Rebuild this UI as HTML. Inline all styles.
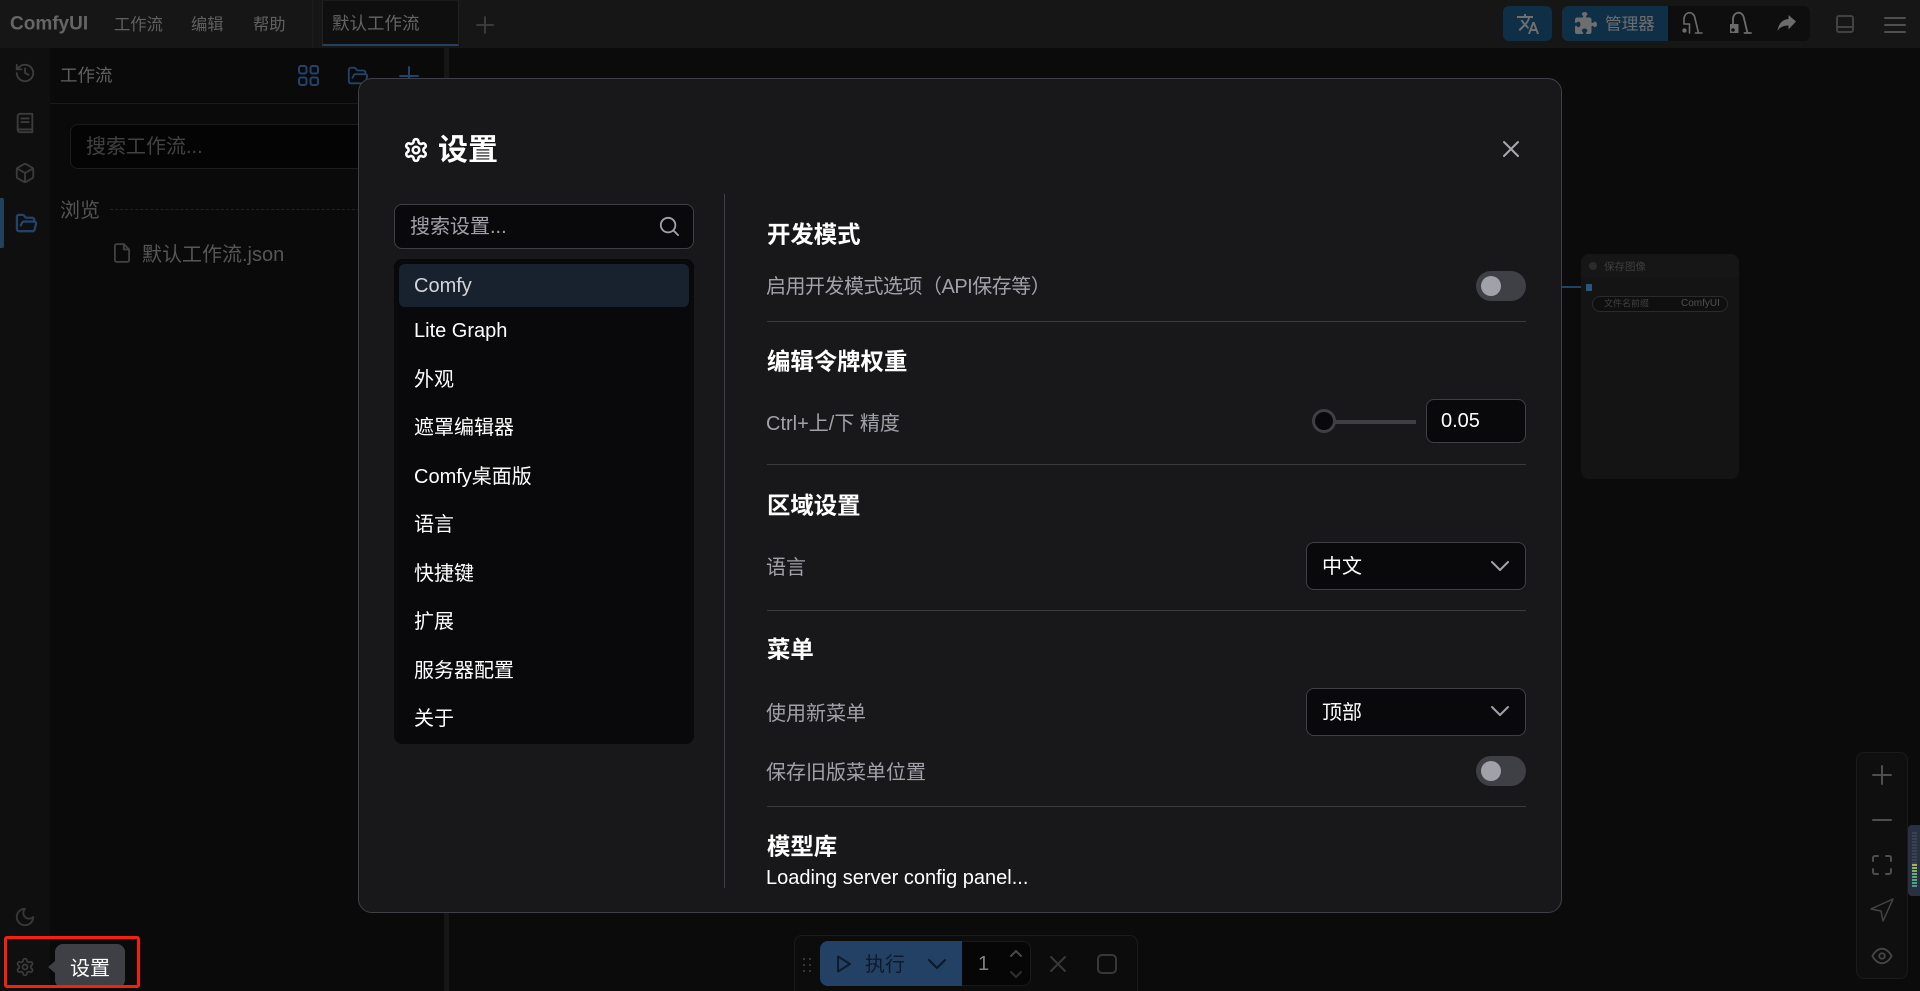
<!DOCTYPE html>
<html lang="zh"><head><meta charset="utf-8"><title>ComfyUI</title>
<style>
html,body{margin:0;padding:0;width:1920px;height:991px;overflow:hidden;background:#0b0b0c}
body{position:relative;font-family:"Liberation Sans","Noto Sans CJK SC",sans-serif;font-size:20px;color:#fff}
.a{position:absolute}
.t{position:absolute;white-space:nowrap;line-height:1;transform:translateY(calc(-50% + 1px))}
svg{position:absolute;display:block;overflow:visible}
.s{fill:none;stroke:currentColor;stroke-width:2;stroke-linecap:round;stroke-linejoin:round}
.h{font-weight:700;font-size:23.4px;left:767px}
.r{font-size:20px;left:766px;color:#a1a1aa}
.d{position:absolute;left:767px;width:759px;height:1px;background:#3b3b3f}
.i{left:414px;font-size:20px;color:#fff}
.tg{position:absolute;left:1476px;width:50px;height:30px;border-radius:15px;background:#3f3f46}
.tg:after{content:"";position:absolute;left:5px;top:5px;width:20px;height:20px;border-radius:50%;background:#a1a1aa}
.sel{position:absolute;left:1306px;width:218px;background:#09090b;border:1px solid #3f3f46;border-radius:8px;box-sizing:content-box}
</style></head><body>

<!-- top bar -->
<div class="a" style="left:0;top:0;width:1920px;height:48px;background:#161616"></div>
<div class="t" style="left:10px;top:23px;font-size:19px;font-weight:700;color:#666">ComfyUI</div>
<div class="t" style="left:114px;top:24px;font-size:16.3px;color:#606060">工作流</div>
<div class="t" style="left:191px;top:24px;font-size:16.3px;color:#606060">编辑</div>
<div class="t" style="left:253px;top:24px;font-size:16.3px;color:#606060">帮助</div>
<div class="a" style="left:312px;top:0;width:1px;height:48px;background:#1c1c1c"></div>
<div class="a" style="left:322px;top:0;width:137px;height:46px;background:#0f0f0f;border:1px solid #232323;border-top:1px solid #1a1a1a;border-bottom:2px solid #23405f;box-sizing:border-box"></div>
<div class="t" style="left:332px;top:23px;font-size:17.5px;color:#646464">默认工作流</div>
<svg style="left:476px;top:16px;color:#3a3a3a" width="18" height="18" viewBox="0 0 18 18"><path class="s" d="M9 1v16M1 9h16"/></svg>

<div class="a" style="left:1503px;top:6px;width:49px;height:35px;background:#0f2f47;border-radius:6px"></div>
<svg style="left:1516px;top:12px;color:#707070" width="24" height="24" viewBox="0 0 24 24"><path fill="currentColor" d="M12.87 15.07l-2.54-2.51.03-.03A17.5 17.5 0 0 0 14.07 6H17V4h-7V2H8v2H1v2h11.17C11.5 7.92 10.44 9.75 9 11.35 8.07 10.32 7.3 9.19 6.69 8h-2c.73 1.63 1.73 3.17 2.98 4.56l-5.09 5.02L4 19l5-5 3.11 3.11.76-2.04zM18.5 10h-2L12 22h2l1.12-3h4.75L21 22h2l-4.5-12zm-2.62 7l1.62-4.33L19.12 17h-3.24z"/></svg>
<div class="a" style="left:1562px;top:6px;width:248px;height:35px;background:#0e0e0e;border-radius:6px"></div>
<div class="a" style="left:1562px;top:6px;width:106px;height:35px;background:#0f2f47;border-radius:6px 0 0 6px"></div>
<svg style="left:1575px;top:12px;color:#6e6e6e" width="22" height="22" viewBox="0 0 512 512"><path fill="currentColor" d="M192 104.8c0-9.2-5.8-17.3-13.2-22.8C167.2 73.3 160 61.3 160 48c0-26.5 28.7-48 64-48s64 21.5 64 48c0 13.3-7.2 25.3-18.8 34-7.4 5.5-13.2 13.600-13.200 22.800 0 12.800 10.400 23.200 23.200 23.200H336c26.500 0 48 21.500 48 48v56.800c0 12.800 10.400 23.200 23.200 23.200 9.200 0 17.300-5.800 22.800-13.200 8.700-11.600 20.700-18.800 34-18.800 26.500 0 48 28.700 48 64s-21.500 64-48 64c-13.300 0-25.300-7.200-34-18.800-5.500-7.400-13.600-13.200-22.800-13.200-12.800 0-23.200 10.400-23.200 23.200V464c0 26.500-21.500 48-48 48h-56.800c-12.800 0-23.200-10.400-23.200-23.200 0-9.200 5.800-17.300 13.200-22.800 11.600-8.700 18.800-20.700 18.800-34 0-26.500-28.700-48-64-48s-64 21.500-64 48c0 13.300 7.200 25.300 18.800 34 7.400 5.500 13.200 13.600 13.200 22.800 0 12.800-10.400 23.200-23.200 23.200H48c-26.500 0-48-21.500-48-48V343.200C0 330.400 10.400 320 23.200 320c9.200 0 17.300 5.800 22.800 13.200 8.700 11.600 20.700 18.800 34 18.800 26.500 0 48-28.700 48-64s-21.500-64-48-64c-13.300 0-25.300 7.200-34 18.800-5.500 7.400-13.600 13.200-22.800 13.200C10.400 256 0 245.600 0 232.800V176c0-26.500 21.500-48 48-48h120.800c12.800 0 23.200-10.400 23.200-23.200z"/></svg>
<div class="t" style="left:1605px;top:24px;font-size:16.6px;color:#6e6e6e">管理器</div>
<svg style="left:1681px;top:12px;color:#6c6c6c" width="22" height="22" viewBox="0 0 22 22"><path class="s" d="M3 12V8a5.500 6.500 0 0 1 11-1.500L17.500 21M14.500 21H21M3 12h5.500v9" style="stroke-width:1.600"/><circle cx="3.500" cy="18.500" r="2.200" fill="currentColor"/></svg>
<svg style="left:1729px;top:12px;color:#6c6c6c" width="22" height="22" viewBox="0 0 22 22"><path class="s" d="M4 12V8a5.500 6.500 0 0 1 11-1.500L18.500 21M15.500 21H22" style="stroke-width:1.800"/><path fill="currentColor" d="M1 12h8.500v9H1z"/><circle cx="4" cy="18" r="1.800" fill="#0e0e0e"/></svg>
<svg style="left:1777px;top:14px;color:#6c6c6c" width="20" height="20" viewBox="0 0 20 20"><path fill="currentColor" d="M19 7.500 11.500 1v4C5 5.500 1.500 10 .5 17c2.500-4 6-5.500 11-5.500V15.500z"/></svg>
<svg style="left:1836px;top:15px;color:#424242" width="18" height="18" viewBox="0 0 18 18"><rect class="s" x="1" y="1" width="16" height="16" rx="2"/><path class="s" d="M1 12h16"/></svg>
<svg style="left:1885px;top:17px;color:#505050" width="20" height="16" viewBox="0 0 20 16"><path class="s" d="M0 1h20M0 8h20M0 15h20"/></svg>

<!-- left strip -->
<div class="a" style="left:0;top:48px;width:50px;height:943px;background:#0f0f0f"></div>
<div class="a" style="left:50px;top:48px;width:394px;height:943px;background:#0a0a0a"></div>
<div class="a" style="left:444px;top:48px;width:5px;height:943px;background:#161616"></div>
<div class="a" style="left:0;top:198px;width:4px;height:50px;background:#23405f;border-radius:0 2px 2px 0"></div>
<svg style="left:14px;top:62px;color:#3c3c3c" width="22" height="22" viewBox="0 0 24 24"><path class="s" d="M3 12a9 9 0 1 0 9-9 9.750 9.750 0 0 0-6.740 2.740L3 8"/><path class="s" d="M3 3v5h5M12 7v5l4 2"/></svg>
<svg style="left:14px;top:112px;color:#3c3c3c" width="22" height="22" viewBox="0 0 24 24"><path class="s" d="M4 19.500v-15A2.500 2.500 0 0 1 6.500 2H20v20H6.500A2.500 2.500 0 0 1 4 19.500z"/><path class="s" d="M4 19h16M8 7h8M8 11h8"/></svg>
<svg style="left:14px;top:162px;color:#3c3c3c" width="22" height="22" viewBox="0 0 24 24"><path class="s" d="M21 8a2 2 0 0 0-1-1.730l-7-4a2 2 0 0 0-2 0l-7 4A2 2 0 0 0 3 8v8a2 2 0 0 0 1 1.730l7 4a2 2 0 0 0 2 0l7-4A2 2 0 0 0 21 16z"/><path class="s" d="m3.300 7 8.700 5 8.700-5M12 22V12"/></svg>
<svg style="left:15px;top:212px;color:#23436a" width="23" height="23" viewBox="0 0 24 24"><path class="s" style="stroke-width:2.400" d="m6 14 1.500-2.900A2 2 0 0 1 9.240 10H20a2 2 0 0 1 1.940 2.500l-1.540 6a2 2 0 0 1-1.950 1.500H4a2 2 0 0 1-2-2V5a2 2 0 0 1 2-2h3.900a2 2 0 0 1 1.690.900l.81 1.200a2 2 0 0 0 1.670.900H18a2 2 0 0 1 2 2v2"/></svg>
<svg style="left:14px;top:906px;color:#383838" width="22" height="22" viewBox="0 0 24 24"><path class="s" d="M12 3a6 6 0 0 0 9 9 9 9 0 1 1-9-9Z"/></svg>

<!-- panel -->
<div class="t" style="left:60px;top:75px;font-size:17.500px;color:#606060">工作流</div>
<div class="a" style="left:50px;top:103px;width:394px;height:1px;background:#1a1a1a"></div>
<svg style="left:298px;top:65px;color:#23436a" width="21" height="21" viewBox="0 0 21 21"><rect class="s" x="1" y="1" width="7.500" height="7.500" rx="2"/><rect class="s" x="12.500" y="1" width="7.500" height="7.500" rx="2"/><rect class="s" x="1" y="12.500" width="7.500" height="7.500" rx="2"/><rect class="s" x="12.500" y="12.500" width="7.500" height="7.500" rx="2"/></svg>
<svg style="left:347px;top:65px;color:#23436a" width="22" height="22" viewBox="0 0 24 24"><path class="s" d="m6 14 1.500-2.900A2 2 0 0 1 9.240 10H20a2 2 0 0 1 1.940 2.500l-1.540 6a2 2 0 0 1-1.950 1.500H4a2 2 0 0 1-2-2V5a2 2 0 0 1 2-2h3.900a2 2 0 0 1 1.690.900l.81 1.200a2 2 0 0 0 1.670.900H18a2 2 0 0 1 2 2v2"/></svg>
<svg style="left:399px;top:66px;color:#23436a" width="20" height="20" viewBox="0 0 20 20"><path class="s" d="M10 1v18M1 10h18"/></svg>
<div class="a" style="left:70px;top:124px;width:340px;height:45px;box-sizing:border-box;background:#040404;border:1px solid #1c1c1c;border-radius:8px"></div>
<div class="t" style="left:86px;top:146px;font-size:20px;color:#424242">搜索工作流...</div>
<div class="t" style="left:60px;top:210px;font-size:20px;color:#545454">浏览</div>
<div class="a" style="left:110px;top:209px;width:260px;border-top:1px dashed #222"></div>
<svg style="left:114px;top:243px;color:#424242" width="16" height="20" viewBox="0 0 18 22"><path class="s" d="M11 1H3a2 2 0 0 0-2 2v16a2 2 0 0 0 2 2h12a2 2 0 0 0 2-2V7z"/><path class="s" d="M11 1v6h6"/></svg>
<div class="t" style="left:142px;top:254px;font-size:20px;color:#565656">默认工作流.json</div>

<!-- node -->
<div class="a" style="left:1581px;top:254px;width:158px;height:225px;background:#141414;border-radius:8px"></div>
<div class="a" style="left:1581px;top:254px;width:158px;height:23px;background:#161616;border-radius:8px 8px 0 0"></div>
<div class="a" style="left:1589px;top:262px;width:8px;height:8px;background:#2b2b2b;border-radius:50%"></div>
<div class="t" style="left:1604px;top:266px;font-size:10.500px;color:#3d3d3d">保存图像</div>
<div class="a" style="left:1561px;top:286px;width:20px;height:2px;background:#1f4463"></div>
<div class="a" style="left:1586px;top:284px;width:6px;height:7px;background:#2d5578"></div>
<div class="a" style="left:1592px;top:296px;width:136px;height:16px;box-sizing:border-box;background:#0f0f0f;border:1px solid #2a2a2a;border-radius:8px"></div>
<div class="t" style="left:1604px;top:303px;font-size:9px;color:#404040">文件名前缀</div>
<div class="t" style="left:1681px;top:303px;font-size:10px;color:#505050">ComfyUI</div>

<!-- graph controls -->
<div class="a" style="left:1856px;top:752px;width:52px;height:227px;box-sizing:border-box;background:#0f0f0f;border:1px solid #1b1b1b;border-radius:8px"></div>
<svg style="left:1872px;top:765px;color:#4e4e4e" width="20" height="20" viewBox="0 0 20 20"><path class="s" d="M10 1v18M1 10h18"/></svg>
<svg style="left:1872px;top:810px;color:#4e4e4e" width="20" height="20" viewBox="0 0 20 20"><path class="s" d="M1 10h18"/></svg>
<svg style="left:1872px;top:855px;color:#4e4e4e" width="20" height="20" viewBox="0 0 20 20"><path class="s" d="M1 6V3a2 2 0 0 1 2-2h3M14 1h3a2 2 0 0 1 2 2v3M19 14v3a2 2 0 0 1-2 2h-3M6 19H3a2 2 0 0 1-2-2v-3"/></svg>
<svg style="left:1870px;top:898px;color:#444" width="24" height="24" viewBox="0 0 24 24"><path class="s" d="M1 11 23 1 13 23 11 13z" style="stroke-width:1.500"/></svg>
<svg style="left:1871px;top:945px;color:#464646" width="22" height="22" viewBox="0 0 24 24"><path class="s" d="M1.500 12s4-8 10.500-8 10.500 8 10.500 8-4 8-10.500 8-10.500-8-10.500-8z"/><circle class="s" cx="12" cy="12" r="3"/></svg>
<div class="a" style="left:1908px;top:825px;width:12px;height:71px;background:#283042;border-radius:4px 0 0 4px"></div>
<div class="a" style="left:1912px;top:832px;width:5px;height:32px;background:repeating-linear-gradient(#3a4252 0 2px,#283042 2px 3px)"></div>
<div class="a" style="left:1912px;top:864px;width:5px;height:24px;background:linear-gradient(#a5b84f,#58b070 50%,#2fa58f);-webkit-mask:repeating-linear-gradient(#000 0 2px,transparent 2px 3px)"></div>

<!-- queue bar -->
<div class="a" style="left:794px;top:935px;width:344px;height:70px;box-sizing:border-box;background:#0c0c0c;border:1px solid #1b1b1b;border-radius:8px"></div>
<svg style="left:803px;top:957px;color:#353535" width="8" height="16" viewBox="0 0 8 16"><g fill="currentColor"><rect width="2" height="2" x="0" y="1"/><rect width="2" height="2" x="6" y="1"/><rect width="2" height="2" x="0" y="7"/><rect width="2" height="2" x="6" y="7"/><rect width="2" height="2" x="0" y="13"/><rect width="2" height="2" x="6" y="13"/></g></svg>
<div class="a" style="left:820px;top:941px;width:142px;height:45px;background:#234165;border-radius:8px 0 0 8px"></div>
<svg style="left:836px;top:955px;color:#101c2c" width="16" height="18" viewBox="0 0 16 18"><path class="s" d="M2 1.500 14 9 2 16.500z"/></svg>
<div class="t" style="left:865px;top:964px;font-size:20px;color:#0f1a29">执行</div>
<svg style="left:928px;top:959px;color:#0d1a2a" width="18" height="10" viewBox="0 0 18 10"><path class="s" style="stroke-width:2.200" d="M1 1l8 8 8-8"/></svg>
<div class="a" style="left:962px;top:941px;width:69px;height:45px;box-sizing:border-box;background:#060606;border:1px solid #1a1a1a;border-left:0;border-radius:0 8px 8px 0"></div>
<div class="t" style="left:978px;top:963px;font-size:20px;color:#808080">1</div>
<svg style="left:1010px;top:949px;color:#484848" width="12" height="8" viewBox="0 0 12 8"><path class="s" d="M1 7l5-5 5 5"/></svg>
<svg style="left:1010px;top:971px;color:#303030" width="12" height="8" viewBox="0 0 12 8"><path class="s" d="M1 1l5 5 5-5"/></svg>
<svg style="left:1050px;top:956px;color:#383838" width="16" height="16" viewBox="0 0 16 16"><path class="s" d="M1 1l14 14M15 1 1 15"/></svg>
<svg style="left:1097px;top:954px;color:#383838" width="20" height="20" viewBox="0 0 20 20"><rect class="s" x="1" y="1" width="18" height="18" rx="4"/></svg>

<!-- gear + tooltip + red box -->
<svg style="left:15px;top:957px;color:#3c3c3c" width="20" height="20" viewBox="0 0 24 24"><path class="s" d="M12.220 2h-.44a2 2 0 0 0-2 2v.18a2 2 0 0 1-1 1.730l-.43.250a2 2 0 0 1-2 0l-.15-.080a2 2 0 0 0-2.730.730l-.220.380a2 2 0 0 0 .730 2.730l.150.100a2 2 0 0 1 1 1.720v.510a2 2 0 0 1-1 1.740l-.150.090a2 2 0 0 0-.730 2.730l.220.380a2 2 0 0 0 2.730.730l.150-.080a2 2 0 0 1 2 0l.430.250a2 2 0 0 1 1 1.730V20a2 2 0 0 0 2 2h.44a2 2 0 0 0 2-2v-.18a2 2 0 0 1 1-1.730l.430-.250a2 2 0 0 1 2 0l.150.080a2 2 0 0 0 2.730-.730l.220-.390a2 2 0 0 0-.730-2.730l-.150-.080a2 2 0 0 1-1-1.740v-.500a2 2 0 0 1 1-1.740l.150-.090a2 2 0 0 0 .730-2.730l-.220-.380a2 2 0 0 0-2.730-.730l-.150.080a2 2 0 0 1-2 0l-.430-.250a2 2 0 0 1-1-1.730V4a2 2 0 0 0-2-2z"/><circle class="s" cx="12" cy="12" r="3"/></svg>
<div class="a" style="left:55px;top:944px;width:70px;height:44px;background:#3f3f46;border-radius:8px"></div>
<div class="a" style="left:48px;top:961px;width:0;height:0;border:6px solid transparent;border-left:0;border-right:7px solid #3f3f46"></div>
<div class="t" style="left:70px;top:968px;font-size:20px;color:#fff">设置</div>
<div class="a" style="left:4px;top:936px;width:136px;height:52px;box-sizing:border-box;border:3px solid #f5210f;border-radius:3px"></div>

<!-- dialog -->
<div class="a" style="left:358px;top:78px;width:1204px;height:835px;box-sizing:border-box;background:#18181b;border:1px solid #3f3f46;border-radius:14px"></div>
<svg style="left:403px;top:137px;color:#fff" width="26" height="26" viewBox="0 0 24 24"><path class="s" style="stroke-width:2.400" d="M12.220 2h-.44a2 2 0 0 0-2 2v.18a2 2 0 0 1-1 1.730l-.43.250a2 2 0 0 1-2 0l-.15-.080a2 2 0 0 0-2.730.730l-.220.380a2 2 0 0 0 .730 2.730l.150.100a2 2 0 0 1 1 1.720v.510a2 2 0 0 1-1 1.740l-.150.090a2 2 0 0 0-.730 2.730l.220.380a2 2 0 0 0 2.730.730l.150-.080a2 2 0 0 1 2 0l.430.250a2 2 0 0 1 1 1.730V20a2 2 0 0 0 2 2h.44a2 2 0 0 0 2-2v-.18a2 2 0 0 1 1-1.730l.430-.250a2 2 0 0 1 2 0l.150.080a2 2 0 0 0 2.730-.730l.220-.390a2 2 0 0 0-.730-2.730l-.150-.080a2 2 0 0 1-1-1.740v-.500a2 2 0 0 1 1-1.740l.150-.090a2 2 0 0 0 .730-2.730l-.220-.380a2 2 0 0 0-2.730-.730l-.150.080a2 2 0 0 1-2 0l-.430-.250a2 2 0 0 1-1-1.730V4a2 2 0 0 0-2-2z"/><circle class="s" style="stroke-width:2.400" cx="12" cy="12" r="3"/></svg>
<div class="t" style="left:438px;top:150px;font-size:30px;font-weight:700">设置</div>
<svg style="left:1503px;top:141px;color:#a8a8ae" width="16" height="16" viewBox="0 0 16 16"><path class="s" d="M1 1l14 14M15 1 1 15"/></svg>

<div class="a" style="left:394px;top:204px;width:300px;height:45px;box-sizing:border-box;background:#09090b;border:1px solid #3f3f46;border-radius:8px"></div>
<div class="t" style="left:410px;top:226px;font-size:20px;color:#a1a1aa">搜索设置...</div>
<svg style="left:659px;top:216px;color:#a1a1aa" width="20" height="20" viewBox="0 0 22 22"><circle class="s" cx="10" cy="10" r="8"/><path class="s" d="M16 16l5 5"/></svg>

<div class="a" style="left:394px;top:259px;width:300px;height:485px;background:#09090b;border-radius:8px"></div>
<div class="a" style="left:399px;top:264px;width:290px;height:43px;background:#18222f;border-radius:6px"></div>
<div class="t i" style="top:285px;color:#d4d4d8">Comfy</div>
<div class="t i" style="top:330px">Lite Graph</div>
<div class="t i" style="top:379px">外观</div>
<div class="t i" style="top:427px">遮罩编辑器</div>
<div class="t i" style="top:476px">Comfy桌面版</div>
<div class="t i" style="top:524px">语言</div>
<div class="t i" style="top:573px">快捷键</div>
<div class="t i" style="top:621px">扩展</div>
<div class="t i" style="top:670px">服务器配置</div>
<div class="t i" style="top:718px">关于</div>

<div class="a" style="left:724px;top:194px;width:1px;height:694px;background:#3f3f46"></div>

<div class="t h" style="top:234px">开发模式</div>
<div class="t r" style="top:286px;letter-spacing:-.5px">启用开发模式选项（API保存等）</div>
<div class="tg" style="top:271px"></div>
<div class="d" style="top:321px"></div>

<div class="t h" style="top:361px">编辑令牌权重</div>
<div class="t r" style="top:423px">Ctrl+上/下 精度</div>
<div class="a" style="left:1330px;top:420px;width:86px;height:4px;background:#3f3f46"></div>
<div class="a" style="left:1312px;top:409px;width:24px;height:24px;box-sizing:border-box;background:#09090b;border:3px solid #3f3f46;border-radius:50%"></div>
<div class="a" style="left:1426px;top:399px;width:100px;height:44px;box-sizing:border-box;background:#09090b;border:1px solid #3f3f46;border-radius:8px"></div>
<div class="t" style="left:1441px;top:420px;font-size:20px">0.05</div>
<div class="d" style="top:464px"></div>

<div class="t h" style="top:505px">区域设置</div>
<div class="t r" style="top:567px">语言</div>
<div class="sel" style="top:542px;height:46px"></div>
<div class="t" style="left:1322px;top:566px;font-size:20px">中文</div>
<svg style="left:1491px;top:561px;color:#a1a1aa" width="18" height="10" viewBox="0 0 18 10"><path class="s" d="M1 1l8 8 8-8"/></svg>
<div class="d" style="top:610px"></div>

<div class="t h" style="top:649px">菜单</div>
<div class="t r" style="top:713px">使用新菜单</div>
<div class="sel" style="top:688px;height:46px"></div>
<div class="t" style="left:1322px;top:712px;font-size:20px">顶部</div>
<svg style="left:1491px;top:706px;color:#a1a1aa" width="18" height="10" viewBox="0 0 18 10"><path class="s" d="M1 1l8 8 8-8"/></svg>
<div class="t r" style="top:772px">保存旧版菜单位置</div>
<div class="tg" style="top:756px"></div>
<div class="d" style="top:806px"></div>

<div class="t h" style="top:846px">模型库</div>
<div class="t" style="left:766px;top:877px;font-size:20px">Loading server config panel...</div>
</body></html>
